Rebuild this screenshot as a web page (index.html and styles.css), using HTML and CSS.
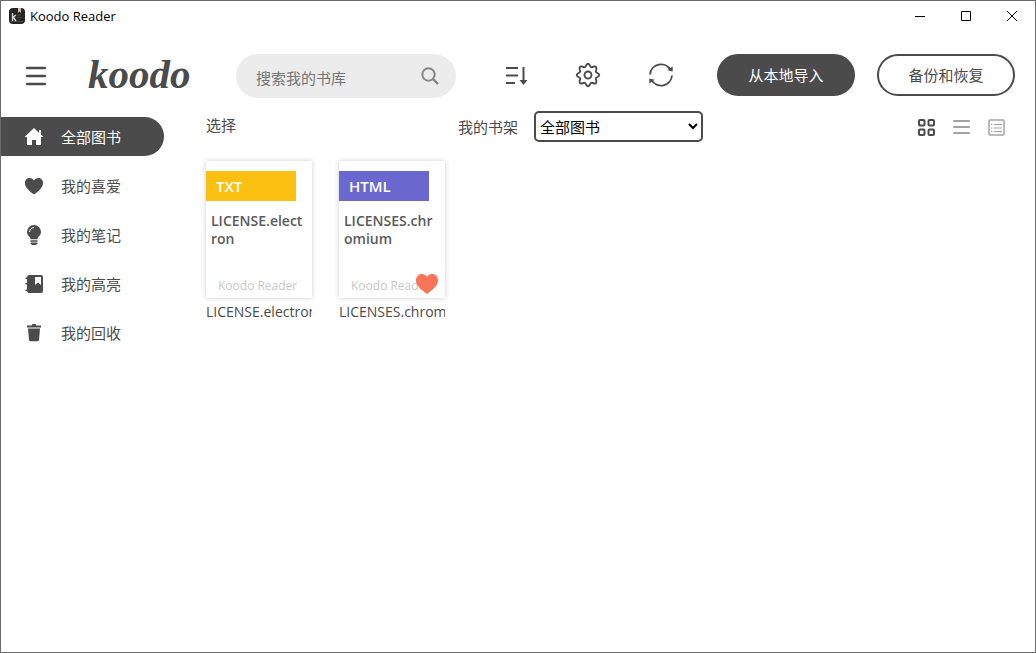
FILE: index.html
```html
<!DOCTYPE html>
<html lang="zh-CN">
<head>
<meta charset="utf-8">
<meta name="viewport" content="width=device-width, initial-scale=1">
<title>Koodo Reader</title>
<link rel="stylesheet" href="styles.css">
</head>
<body>
<div class="window">
  <div class="titlebar">
    <svg class="app-icon" width="16" height="16" viewBox="0 0 16 16" aria-hidden="true">
      <rect width="16" height="16" rx="4" fill="#262626"/>
      <path d="M9 0h3v5l-1.500-1.500L9 5z" fill="#d9bda0"/>
      <path d="M7.500 7h5M8 9.500h4.500M2 13.500h12" stroke="#555" stroke-width=".7"/>
      <path d="M3.500 5v8M6.800 7L3.700 10M4.500 9.500L7 13" stroke="#ddd" stroke-width="1.300" fill="none"/>
    </svg>
    <span class="app-name">Koodo Reader</span>
    <div class="window-controls">
      <button type="button" aria-label="最小化"><svg width="12" height="12" viewBox="0 0 12 12"><path d="M1 6.500h10"/></svg></button>
      <button type="button" aria-label="最大化"><svg width="12" height="12" viewBox="0 0 12 12"><path d="M1.500 1.500h9v9h-9z"/></svg></button>
      <button type="button" aria-label="关闭"><svg width="12" height="12" viewBox="0 0 12 12"><path d="M1 1l10 10M11 1L1 11"/></svg></button>
    </div>
  </div>

  <header class="header">
    <button class="icon-button menu-button" type="button" aria-label="菜单">
      <svg width="22" height="20" viewBox="0 0 22 20"><path d="M2 2h18M2 10h18M2 18h18" stroke-width="2.300" stroke-linecap="round"/></svg>
    </button>
    <div class="logo">koodo</div>
    <form class="search">
      <input type="search" aria-label="搜索" placeholder="搜索我的书库">
      <button class="icon-button" type="submit" aria-label="搜索">
        <svg class="search-icon" width="18" height="18" viewBox="0 0 18 18"><circle cx="7.500" cy="7.500" r="6.200" stroke-width="2"/><path d="M12 12l5 5" stroke-width="2.400"/></svg>
      </button>
    </form>
    <div class="tools">
      <button class="icon-button" type="button" aria-label="排序">
        <svg width="23" height="26" viewBox="0 0 23 26"><path d="M1 6h12M1 13.500h12M1 21h9" stroke-width="2"/><path d="M18.500 5v14" stroke-width="2"/><path d="M14.500 18h8l-4 5z" fill="#4b4b4b" stroke="none"/></svg>
      </button>
      <button class="icon-button" type="button" aria-label="设置">
        <svg width="26" height="26" viewBox="0 0 26 26"><path d="M11.200 3.200Q13 .2 14.800 3.200C15.600 5.400 16.600 5.700 18.700 4.700Q22.100 3.900 21.300 7.300C20.300 9.400 20.600 10.400 22.800 11.200Q25.800 13 22.800 14.800C20.600 15.600 20.300 16.600 21.300 18.700Q22.100 22.100 18.700 21.300C16.600 20.300 15.600 20.600 14.800 22.800Q13 25.800 11.200 22.800C10.400 20.600 9.400 20.300 7.300 21.300Q3.900 22.100 4.700 18.700C5.700 16.600 5.400 15.600 3.200 14.800Q.2 13 3.200 11.200C5.400 10.400 5.700 9.400 4.700 7.300Q3.900 3.900 7.300 4.700C9.400 5.700 10.400 5.400 11.200 3.200z" stroke-width="1.900" stroke-linejoin="round"/><circle cx="13" cy="13" r="3.500" stroke-width="1.900"/></svg>
      </button>
      <button class="icon-button" type="button" aria-label="刷新">
        <svg width="26" height="26" viewBox="0 0 26 26"><path d="M2 12.500A11 11 0 0 1 22.500 8M24 13.500A11 11 0 0 1 3.500 18" stroke-width="1.800"/><path d="M24.700 4.500V9.500L19.300 8.200zM1.300 21.500v-5l5.400 1.300z" fill="#4b4b4b" stroke="none"/></svg>
      </button>
    </div>
    <div class="actions">
      <button class="pill pill-solid" type="button">从本地导入</button>
      <button class="pill" type="button">备份和恢复</button>
    </div>
  </header>

  <div class="body">
    <nav class="sidebar">
      <a class="nav-item active" href="#all">
        <svg width="20" height="20" viewBox="0 0 20 20"><path d="M10 1L.5 10H3v8h5v-5h4v5h5v-8h2.500L17 7.500V3h-2v2.700z"/></svg>
        全部图书</a>
      <a class="nav-item" href="#favorites">
        <svg width="20" height="20" viewBox="0 0 20 20"><path d="M10 18.500C3 13.500 1 10.500 1 6.800 1 3.800 3.200 2 5.600 2 7.500 2 9 2.900 10 4.500 11 2.900 12.500 2 14.400 2 16.800 2 19 3.800 19 6.800c0 3.700-2 6.700-9 11.700z"/></svg>
        我的喜爱</a>
      <a class="nav-item" href="#notes">
        <svg width="20" height="20" viewBox="0 0 20 20"><path d="M10 0a7 7 0 0 0-7 7c0 3.700 3.300 4.300 3.500 7.200h7C13.700 11.300 17 10.700 17 7a7 7 0 0 0-7-7zM6.500 15.200h7v1.500h-7zM6.500 17.600h7v.8L12 20H8l-1.500-1.600z"/><path d="M5.500 7A4.500 4.500 0 0 1 10 2.600" fill="none" stroke="#fff"/></svg>
        我的笔记</a>
      <a class="nav-item" href="#highlights">
        <svg width="20" height="20" viewBox="0 0 20 20"><path d="M5 1h12a2 2 0 0 1 2 2v14a2 2 0 0 1-2 2H5a2 2 0 0 1-2-2H1.500v-1.500H3v-5H1.500V9H3V5H1.500V3.500H3A2.500 2.500 0 0 1 5 1z"/><path d="M11 3h6v8l-3-2.500L11 11z" fill="#fff"/></svg>
        我的高亮</a>
      <a class="nav-item" href="#trash">
        <svg width="20" height="20" viewBox="0 0 20 20"><path d="M3 2.500h4.500L8.500 1h3l1 1.500H17v2H3zM4 5.500h12L15 17a1.500 1.500 0 0 1-1.500 1.300h-7A1.500 1.500 0 0 1 5 17z"/></svg>
        我的回收</a>
    </nav>

    <main class="content">
      <div class="toolbar">
        <button class="select-button" type="button">选择</button>
        <label for="shelf">我的书架</label>
        <select id="shelf"><option>全部图书</option></select>
        <div class="views">
          <button class="icon-button" type="button" aria-label="网格">
            <svg width="19" height="19" viewBox="0 0 19 19"><g stroke-width="2"><rect x="2" y="2" width="5.500" height="5.500" rx="1"/><rect x="11.500" y="2" width="5.500" height="5.500" rx="1"/><rect x="2" y="11.500" width="5.500" height="5.500" rx="1"/><rect x="11.500" y="11.500" width="5.500" height="5.500" rx="1"/></g></svg>
          </button>
          <button class="icon-button faded" type="button" aria-label="列表">
            <svg width="19" height="19" viewBox="0 0 19 19"><path d="M2 3h15M2 9h15M2 15h15" stroke-width="2" stroke-linecap="round"/></svg>
          </button>
          <button class="icon-button faded" type="button" aria-label="封面">
            <svg width="19" height="19" viewBox="0 0 19 19"><rect x="2" y="2" width="15" height="15" rx="1" stroke-width="1.500"/><path d="M4 6.500h1.500M4 10h1.500M4 13.500h1.500M7 6.500h8M7 10h8M7 13.500h8" stroke-width="1.200"/></svg>
          </button>
        </div>
      </div>

      <div class="books">
        <article class="book">
          <div class="cover">
            <div class="format txt">TXT</div>
            <div class="cover-title">LICENSE.electron</div>
            <div class="brand">Koodo Reader</div>
          </div>
          <div class="book-name">LICENSE.electron</div>
        </article>
        <article class="book">
          <div class="cover">
            <div class="format html">HTML</div>
            <div class="cover-title">LICENSES.chromium</div>
            <div class="brand">Koodo Reader</div>
            <svg class="loved" width="24" height="24" viewBox="0 0 24 24"><path d="M12 22C4 16.300 1 12.500 1 8.200 1 4.700 3.600 2 7 2c2.100 0 4 1.100 5 3 1-1.900 2.900-3 5-3 3.400 0 6 2.700 6 6.200 0 4.300-3 8.100-11 13.800z"/></svg>
          </div>
          <div class="book-name">LICENSES.chromium</div>
        </article>
      </div>
    </main>
  </div>
</div>
</body>
</html>
```
FILE: styles.css
```css
* { box-sizing: border-box; }

body {
  margin: 0;
  color: #4b4b4b;
  background: #fff;
  font: 15px/20px "Open Sans", "Noto Sans CJK SC", sans-serif;
}

button, input, select { font: inherit; color: inherit; }

button {
  padding: 0;
  border: 0;
  background: none;
  cursor: pointer;
}

svg { display: block; flex: none; }

.window {
  display: flex;
  flex-direction: column;
  min-height: 100vh;
  border: 1px solid #6b6b6b;
}

.titlebar {
  display: flex;
  align-items: center;
  height: 29px;
  padding-left: 8px;
}

.app-name {
  margin-left: 5px;
  color: #000;
  font-size: 13px;
}

.window-controls { display: flex; margin-left: auto; }

.window-controls button {
  display: grid;
  place-items: center;
  width: 46px;
  height: 29px;
}

.window-controls svg { fill: none; stroke: #000; }

.header {
  display: flex;
  align-items: center;
  padding: 24px 20px 0 24px;
}

.icon-button svg { fill: none; stroke: #4b4b4b; }

.logo {
  width: 148px;
  padding: 0 0 4px 41px;
  font: italic bold 41px/40px "Liberation Serif", serif;
}

.search {
  display: flex;
  align-items: center;
  width: 220px;
  height: 44px;
  margin-left: 41px;
  padding: 0 17px 0 20px;
  border-radius: 22px;
  background: #ececec;
}

.search input {
  flex: 1;
  min-width: 0;
  height: 44px;
  padding: 4px 0 0;
  border: 0;
  outline: 0;
  background: none;
}

.search input::placeholder { color: #757575; }
.search .search-icon { stroke: #858585; }

.tools {
  display: flex;
  align-items: center;
  align-self: flex-start;
  gap: 47px;
  height: 42px;
  margin-left: 49px;
}

.actions {
  display: flex;
  align-self: flex-start;
  gap: 22px;
  margin-left: auto;
}

.pill {
  width: 138px;
  height: 42px;
  border: 2px solid #4b4b4b;
  border-radius: 21px;
}

.pill-solid { color: #fff; background: #4b4b4b; }

.body { display: flex; flex: 1; }

.sidebar {
  display: flex;
  flex-direction: column;
  gap: 10px;
  width: 163px;
  padding-top: 19px;
}

.nav-item {
  display: flex;
  align-items: center;
  gap: 17px;
  height: 39px;
  padding-left: 23px;
  border-radius: 0 20px 20px 0;
  color: inherit;
  text-decoration: none;
}

.nav-item svg { fill: #4b4b4b; }
.nav-item.active { color: #fff; background: #4b4b4b; }
.nav-item.active svg { fill: #fff; }

.content { flex: 1; padding: 13px 29px 0 42px; }

.toolbar { display: flex; align-items: center; }

.select-button { margin-right: 222px; padding-bottom: 4px; }

.toolbar select {
  width: 169px;
  height: 31px;
  margin-left: 16px;
  border: 2px solid #4b4b4b;
  border-radius: 5px;
  color: #000;
  background: #fff;
}

.views { display: flex; gap: 16px; margin-left: auto; padding-top: 2px; }
.faded { opacity: 0.5; }

.books {
  display: flex;
  flex-wrap: wrap;
  gap: 27px;
  margin-top: 19px;
}

.book { width: 106px; }

.cover {
  position: relative;
  display: flex;
  flex-direction: column;
  height: 137px;
  padding: 10px 0 2px;
  box-shadow: 0 0 5px rgba(0, 0, 0, 0.2);
}

.format {
  width: 90px;
  padding-left: 10px;
  color: #fff;
  font-size: 15px;
  font-weight: 600;
  line-height: 30px;
}

.txt { background: #fbc012; }
.html { background: #6a67ce; }

.cover-title {
  margin: 11px 5px 0;
  color: #5a5a5a;
  font-size: 14px;
  font-weight: 600;
  line-height: 18px;
  word-break: break-all;
}

.brand {
  margin-top: auto;
  padding-left: 12px;
  color: #c8c8c8;
  font-size: 12px;
  white-space: nowrap;
}

.loved {
  position: absolute;
  right: 6px;
  bottom: 2px;
  fill: #f97557;
}

.book-name {
  margin-top: 4px;
  font-size: 14px;
  white-space: nowrap;
  overflow: hidden;
}
```
